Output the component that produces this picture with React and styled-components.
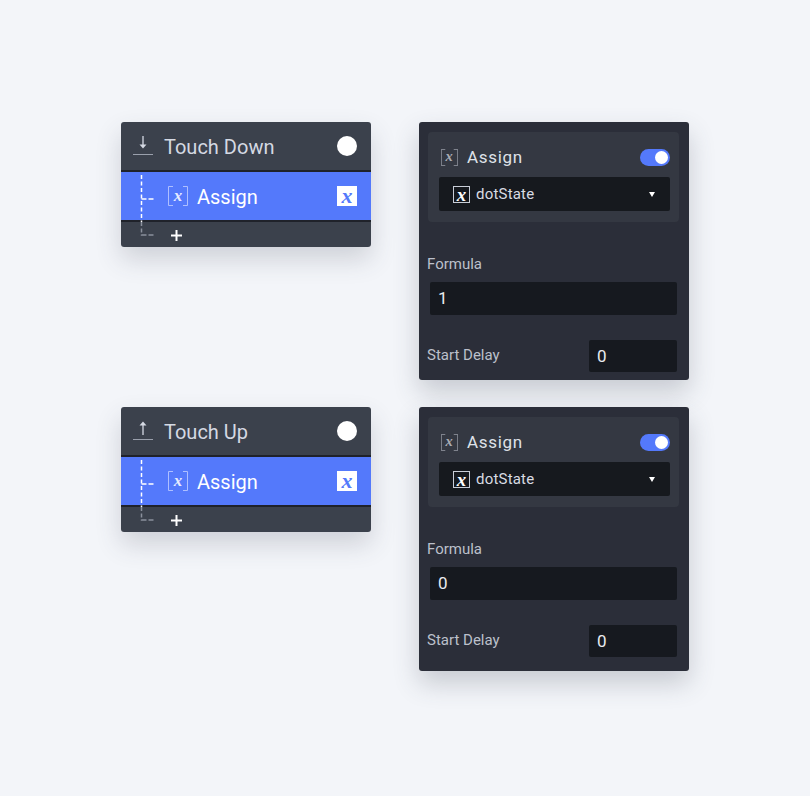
import React from 'react'
import styled, { createGlobalStyle } from 'styled-components'

const GlobalStyle = createGlobalStyle`
  html, body { margin: 0; padding: 0; background: #f3f5f9; }
  body { font-family: Roboto, "Noto Sans", sans-serif; }
`

const Page = styled.main`
  width: 810px;
  height: 796px;
  box-sizing: border-box;
  padding: 122px 0 0 121px;
  display: grid;
  grid-template-columns: 250px 270px;
  grid-template-rows: 258px auto;
  column-gap: 48px;
  row-gap: 27px;
  align-items: start;
`

const Card = styled.section`
  position: relative;
  width: 250px;
  height: 125px;
  border-radius: 3px;
  overflow: hidden;
  background: #3b414c;
`

const CardWrap = styled.div`
  border-radius: 3px;
  box-shadow: 0 12px 26px rgba(60, 66, 84, 0.2);
`

const TriggerRow = styled.div`
  height: 48px;
  display: flex;
  align-items: center;
  padding: 0 14px 0 12px;
  color: #d5d9e3;
  font-size: 20px;
  border-bottom: 2px solid #1f222a;
`

const TriggerLabel = styled.span`
  margin-left: 11px;
  padding-top: 2px;
  flex: 1;
`

const Dot = styled.span`
  width: 20px;
  height: 20px;
  border-radius: 50%;
  background: #fff;
`

const ActionRow = styled.div`
  height: 48px;
  display: flex;
  align-items: center;
  padding: 0 14px 0 47px;
  background: #5479fb;
  color: #fff;
  font-size: 20px;
  border-bottom: 2px solid #1f222a;
`

const ActionLabel = styled.span`
  margin-left: 9px;
  padding-top: 2px;
  flex: 1;
`

const VarBadge = styled.span`
  width: 20px;
  height: 20px;
  background: #fff;
  color: #5479fb;
  display: flex;
  align-items: center;
  justify-content: center;
  font: italic bold 22px/18px "Liberation Serif", serif;
`

const AddRow = styled.div`
  height: 25px;
  display: flex;
  align-items: center;
  padding: 1px 0 0 50px;
  box-sizing: border-box;
`

const Tree = styled.svg`
  position: absolute;
  left: 0;
  top: 0;
  pointer-events: none;
`

const Bracket = styled.span`
  position: relative;
  display: inline-flex;
  align-items: center;
  justify-content: center;
  box-sizing: border-box;
  width: ${p => p.$size}px;
  height: ${p => p.$size}px;
  padding-bottom: 2px;
  color: ${p => p.$textColor};
  font: italic 700 ${p => p.$size * 0.85}px/1 "Liberation Serif", serif;
`

const BracketLines = styled.svg`
  position: absolute;
  inset: 0;
`

const Panel = styled.section`
  width: 270px;
  box-sizing: border-box;
  padding: 10px 8px ${p => p.$bottom}px;
  background: #2b2e39;
  border-radius: 3px;
  box-shadow: 0 12px 26px rgba(60, 66, 84, 0.24);
`

const ActionBox = styled.div`
  background: #343842;
  border-radius: 4px;
  margin: 0 2px 0 1px;
  padding: 13px 9px 10px 11px;
  height: 90px;
  box-sizing: border-box;
`

const ActionHead = styled.div`
  display: flex;
  align-items: center;
  height: 24px;
  padding: 0 0 0 2px;
  color: #dfe2e8;
  font-size: 17px;
  letter-spacing: 0.7px;
`

const HeadLabel = styled.span`
  margin-left: 9px;
  flex: 1;
`

const Toggle = styled.span`
  width: 30px;
  height: 17px;
  border-radius: 9px;
  background: #5479fb;
  display: flex;
  align-items: center;
  justify-content: flex-end;
  padding-right: 2px;
  box-sizing: border-box;
`

const Knob = styled.span`
  width: 13px;
  height: 13px;
  border-radius: 50%;
  background: #fff;
`

const Select = styled.div`
  height: 34px;
  margin-top: 8px;
  background: #16191e;
  border-radius: 2px;
  display: flex;
  align-items: center;
  padding: 0 15px 0 14px;
  color: #d9dce3;
  font-size: 15px;
  letter-spacing: 0.2px;
`

const SelectLabel = styled.span`
  margin-left: 6px;
  flex: 1;
`

const VarOutline = styled.span`
  width: 17px;
  height: 17px;
  box-sizing: border-box;
  border: 1px solid #c9ced8;
  color: #fff;
  display: flex;
  align-items: center;
  justify-content: center;
  font: italic bold 19px/13px "Liberation Serif", serif;
`

const Caret = styled.span`
  width: 0;
  height: 0;
  border-left: 3.5px solid transparent;
  border-right: 3.5px solid transparent;
  border-top: 5px solid #fff;
`

const FieldLabel = styled.div`
  color: #bcc0cb;
  font-size: 15px;
  line-height: 17px;
`

const FormulaLabel = styled(FieldLabel)`
  margin-top: 34px;
`

const DelayLabel = styled(FieldLabel)`
  margin-bottom: 2px;
`

const Input = styled.div`
  box-sizing: border-box;
  background: #16191f;
  border-radius: 2px;
  color: #e9ebef;
  font-size: 17px;
  display: flex;
  align-items: center;
  padding: 0 0 1px 8px;
`

const FormulaInput = styled(Input)`
  height: 33px;
  margin: 9px 4px 0 3px;
`

const DelayRow = styled.div`
  display: flex;
  align-items: center;
  justify-content: space-between;
  margin: 25px 4px 0 0;
`

const DelayInput = styled(Input)`
  width: 88px;
  height: 32px;
`

const ArrowIcon = ({ up }) => (
  <svg width="20" height="20" viewBox="0 0 20 20" fill="none" stroke="#d5d9e3">
    <path d="M0 18.500h20" stroke="#9aa0ac" />
    <path d={up ? 'M10 14V2' : 'M10 0v10'} strokeWidth="1.3" />
    <path d={up ? 'M6.500 4.500L10 .5l3.500 4z' : 'M6.500 8.500L10 12.500l3.500-4z'} fill="#d5d9e3" stroke="none" />
  </svg>
)

const BracketX = ({ size, color, textColor }) => (
  <Bracket $size={size} $textColor={textColor}>
    x
    <BracketLines viewBox="0 0 20 20" fill="none" stroke={color} strokeWidth={20 / size}>
      <path d="M5 .5H.5v19H5M15 .5h4.5v19H15" />
    </BracketLines>
  </Bracket>
)

const TreeLines = () => (
  <Tree width="60" height="125" fill="none" strokeWidth="1.5">
    <path d="M20.500 53v47" stroke="#fff" strokeDasharray="4 2.500" />
    <path d="M20.500 77h5M27.500 77h5" stroke="#fff" />
    <path d="M20.500 100v12" stroke="#8b909c" strokeDasharray="4 2.500" />
    <path d="M20.500 112.500v.5h5M27.500 113h5" stroke="#8b909c" />
  </Tree>
)

const PlusIcon = () => (
  <svg width="11" height="11" viewBox="0 0 11 11" stroke="#fff" strokeWidth="2">
    <path d="M5.500 0v11M0 5.500h11" />
  </svg>
)

const EventCard = ({ title, up }) => (
  <CardWrap>
    <Card>
      <TriggerRow>
        <ArrowIcon up={up} />
        <TriggerLabel>{title}</TriggerLabel>
        <Dot />
      </TriggerRow>
      <ActionRow>
        <BracketX size={20} color="#aebfff" textColor="#e6ebff" />
        <ActionLabel>Assign</ActionLabel>
        <VarBadge>x</VarBadge>
      </ActionRow>
      <AddRow>
        <PlusIcon />
      </AddRow>
      <TreeLines />
    </Card>
  </CardWrap>
)

const AssignPanel = ({ formula, bottom }) => (
  <Panel $bottom={bottom}>
    <ActionBox>
      <ActionHead>
        <BracketX size={17} color="#7f838d" textColor="#a9acb5" />
        <HeadLabel>Assign</HeadLabel>
        <Toggle><Knob /></Toggle>
      </ActionHead>
      <Select>
        <VarOutline>x</VarOutline>
        <SelectLabel>dotState</SelectLabel>
        <Caret />
      </Select>
    </ActionBox>
    <FormulaLabel>Formula</FormulaLabel>
    <FormulaInput>{formula}</FormulaInput>
    <DelayRow>
      <DelayLabel>Start Delay</DelayLabel>
      <DelayInput>0</DelayInput>
    </DelayRow>
  </Panel>
)

export default function App() {
  return (
    <Page>
      <GlobalStyle />
      <EventCard title="Touch Down" />
      <AssignPanel formula="1" bottom={8} />
      <EventCard title="Touch Up" up />
      <AssignPanel formula="0" bottom={14} />
    </Page>
  )
}
